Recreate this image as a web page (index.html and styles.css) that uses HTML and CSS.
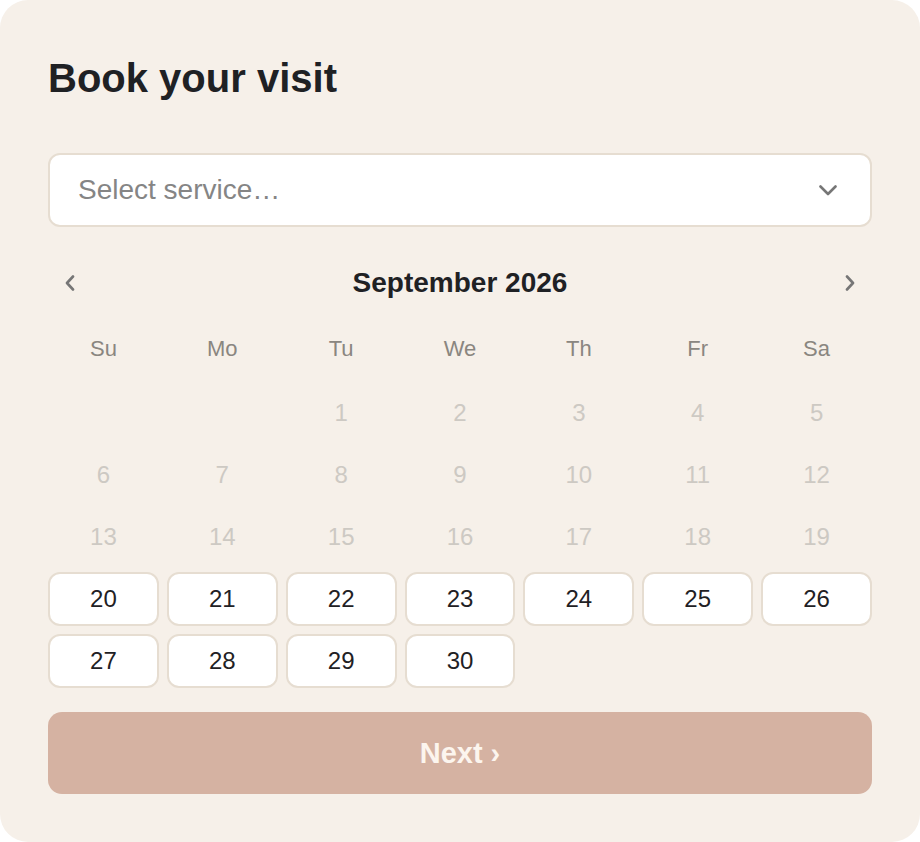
FILE: index.html
```html
<!DOCTYPE html>
<html lang="en">
  <head>
    <meta charset="UTF-8" />
    <meta name="viewport" content="width=device-width, initial-scale=1.0" />
    <title>Book your visit</title>
    <link rel="stylesheet" href="styles.css">
  </head>
  <body>
    <div class="card">
      <h1>Book your visit</h1>

      <button class="select">
        <span>Select service…</span>
        <svg width="18" height="11" viewBox="0 0 18 11"><polyline points="1.5,1.5 9,9 16.5,1.5" /></svg>
      </button>

      <div class="month-nav">
        <button class="nav-btn" aria-label="Previous month">
          <svg width="12" height="16" viewBox="0 0 12 16"><polyline points="9,1.5 3,8 9,14.5" /></svg>
        </button>
        <div class="month">September 2026</div>
        <button class="nav-btn" aria-label="Next month">
          <svg width="12" height="16" viewBox="0 0 12 16"><polyline points="3,1.5 9,8 3,14.5" /></svg>
        </button>
      </div>

      <div class="weekdays">
        <div>Su</div><div>Mo</div><div>Tu</div><div>We</div><div>Th</div><div>Fr</div><div>Sa</div>
      </div>

      <div class="days" id="days"></div>

      <button class="next">Next ›</button>
    </div>

    <script>
      const days = document.getElementById("days");
      const offset = 2; // Sept 1 2026 is a Tuesday
      const firstOpen = 20;
      let html = "";
      for (let i = 0; i < offset; i++) html += `<div class="day empty"></div>`;
      for (let d = 1; d <= 30; d++) {
        html += d < firstOpen
          ? `<div class="day off">${d}</div>`
          : `<button class="day open">${d}</button>`;
      }
      days.innerHTML = html;
    </script>
  </body>
</html>
```

FILE: styles.css
```css
* {
  box-sizing: border-box;
}
body {
  margin: 0;
  background: #ffffff;
  font-family: "Liberation Sans", Arial, sans-serif;
  color: #1f2124;
}

.card {
  width: 920px;
  height: 842px;
  padding: 54px 48px 48px;
  background: #f6f0e9;
  border-radius: 28px;
  display: flex;
  flex-direction: column;
}

h1 {
  margin: 0;
  font-size: 40px;
  line-height: 48px;
  font-weight: bold;
  color: #1f2124;
}

button {
  font-family: inherit;
  cursor: pointer;
}

.select {
  margin-top: 51px;
  height: 74px;
  width: 100%;
  display: flex;
  align-items: center;
  justify-content: space-between;
  padding: 0 33px 0 28px;
  background: #ffffff;
  border: 2px solid #e6ddd1;
  border-radius: 12px;
  font-size: 28px;
  color: #858585;
  text-align: left;
}
.select svg polyline,
.nav-btn svg polyline {
  fill: none;
  stroke: #767676;
  stroke-width: 2.6;
  stroke-linecap: round;
  stroke-linejoin: round;
}

.month-nav {
  margin-top: 28px;
  height: 56px;
  display: flex;
  align-items: center;
  justify-content: space-between;
}
.nav-btn {
  width: 44px;
  height: 44px;
  border: none;
  background: none;
  padding: 0;
  display: flex;
  align-items: center;
  justify-content: center;
}
.month {
  font-size: 28px;
  font-weight: bold;
  color: #1f2124;
}

.weekdays {
  margin-top: 18px;
  height: 40px;
  display: grid;
  grid-template-columns: repeat(7, 1fr);
  gap: 8px;
  align-items: center;
  text-align: center;
  font-size: 22px;
  color: #8a8680;
}

.days {
  margin-top: 17px;
  display: grid;
  grid-template-columns: repeat(7, 1fr);
  grid-auto-rows: 54px;
  gap: 8px;
}
.day {
  display: flex;
  align-items: center;
  justify-content: center;
  font-size: 24px;
}
.day.off {
  color: #cdc9c3;
}
.day.open {
  background: #ffffff;
  border: 2px solid #e6ddd1;
  border-radius: 12px;
  color: #1f2124;
  padding: 0;
}

.next {
  margin-top: 24px;
  height: 82px;
  width: 100%;
  border: none;
  border-radius: 14px;
  background: #d5b2a2;
  color: #fcf5ee;
  font-size: 29px;
  font-weight: bold;
}
```
